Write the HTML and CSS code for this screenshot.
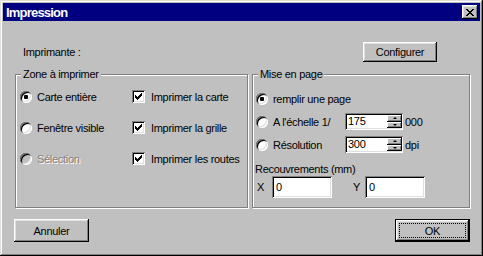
FILE: index.html
```html
<!DOCTYPE html>
<html lang="fr">
<head>
<meta charset="utf-8">
<title>Impression</title>
<link rel="stylesheet" href="styles.css">
</head>
<body>
<div class="window">
  <div class="titlebar">
    <span class="title">Impression</span>
    <button class="close" aria-label="Fermer">
      <svg width="8" height="7" viewBox="0 0 8 7" shape-rendering="crispEdges">
        <rect x="0" y="0" width="2" height="1"/><rect x="6" y="0" width="2" height="1"/>
        <rect x="1" y="1" width="2" height="1"/><rect x="5" y="1" width="2" height="1"/>
        <rect x="2" y="2" width="4" height="1"/>
        <rect x="3" y="3" width="2" height="1"/>
        <rect x="2" y="4" width="4" height="1"/>
        <rect x="1" y="5" width="2" height="1"/><rect x="5" y="5" width="2" height="1"/>
        <rect x="0" y="6" width="2" height="1"/><rect x="6" y="6" width="2" height="1"/>
      </svg>
    </button>
  </div>
  <div class="content">
    <div class="header">
      <span class="printer-label">Imprimante :</span>
      <button class="btn btn-config">Configurer</button>
    </div>
    <div class="groups">
      <div class="group group-zone">
        <div class="group-label">Zone à imprimer</div>
        <div class="zone-grid">
          <div class="opt"><span class="radio checked"></span><span>Carte entière</span></div>
          <div class="opt opt-check"><span class="check"><svg width="7" height="7" viewBox="0 0 7 7" shape-rendering="crispEdges"><rect x="0" y="2" width="1" height="3"/><rect x="1" y="3" width="1" height="3"/><rect x="2" y="4" width="1" height="3"/><rect x="3" y="3" width="1" height="3"/><rect x="4" y="2" width="1" height="3"/><rect x="5" y="1" width="1" height="3"/><rect x="6" y="0" width="1" height="3"/></svg></span><span>Imprimer la carte</span></div>
          <div class="opt"><span class="radio"></span><span>Fenêtre visible</span></div>
          <div class="opt opt-check"><span class="check"><svg width="7" height="7" viewBox="0 0 7 7" shape-rendering="crispEdges"><rect x="0" y="2" width="1" height="3"/><rect x="1" y="3" width="1" height="3"/><rect x="2" y="4" width="1" height="3"/><rect x="3" y="3" width="1" height="3"/><rect x="4" y="2" width="1" height="3"/><rect x="5" y="1" width="1" height="3"/><rect x="6" y="0" width="1" height="3"/></svg></span><span>Imprimer la grille</span></div>
          <div class="opt disabled"><span class="radio"></span><span>Sélection</span></div>
          <div class="opt opt-check"><span class="check"><svg width="7" height="7" viewBox="0 0 7 7" shape-rendering="crispEdges"><rect x="0" y="2" width="1" height="3"/><rect x="1" y="3" width="1" height="3"/><rect x="2" y="4" width="1" height="3"/><rect x="3" y="3" width="1" height="3"/><rect x="4" y="2" width="1" height="3"/><rect x="5" y="1" width="1" height="3"/><rect x="6" y="0" width="1" height="3"/></svg></span><span>Imprimer les routes</span></div>
        </div>
      </div>
      <div class="group group-page">
        <div class="group-label">Mise en page</div>
        <div class="page-grid">
          <div class="opt span-all"><span class="radio checked"></span><span>remplir une page</span></div>
          <div class="opt"><span class="radio"></span><span>A l'échelle 1/</span></div>
          <div class="spin"><span class="spin-value">175</span><span class="spin-buttons"><span class="spin-btn"><span class="tri-up"></span></span><span class="spin-btn"><span class="tri-down"></span></span></span></div>
          <span class="suffix">000</span>
          <div class="opt"><span class="radio"></span><span>Résolution</span></div>
          <div class="spin"><span class="spin-value">300</span><span class="spin-buttons"><span class="spin-btn"><span class="tri-up"></span></span><span class="spin-btn"><span class="tri-down"></span></span></span></div>
          <span class="suffix">dpi</span>
        </div>
        <div class="overlap-label">Recouvrements (mm)</div>
        <div class="overlap-row">
          <span class="axis">X</span>
          <span class="field">0</span>
          <span class="axis axis-y">Y</span>
          <span class="field">0</span>
        </div>
      </div>
    </div>
    <div class="footer">
      <button class="btn btn-foot">Annuler</button>
      <button class="btn btn-foot btn-default"><span class="focus">OK</span></button>
    </div>
  </div>
</div>
</body>
</html>
```

FILE: styles.css
```css
* {
  box-sizing: border-box;
}

body {
  margin: 0;
  background: #c0c0c0;
  color: #000;
  font-family: "Liberation Sans", Arial, sans-serif;
  font-size: 11px;
  letter-spacing: -0.3px;
}

.window {
  width: 483px;
  height: 256px;
  padding: 3px;
  background: #c0c0c0;
  box-shadow: inset -1px -1px #000, inset 1px 1px #dfdfdf, inset -2px -2px #808080, inset 2px 2px #fff;
}

.titlebar {
  height: 18px;
  background: #000080;
  display: flex;
  align-items: center;
  justify-content: space-between;
  padding: 0 2px 0 3px;
}

.title {
  color: #fff;
  font-weight: bold;
  font-size: 13px;
  letter-spacing: -0.8px;
}

.close {
  width: 16px;
  height: 14px;
  padding: 1px 0 0 0;
  border: 0;
  background: #c0c0c0;
  box-shadow: inset -1px -1px #000, inset 1px 1px #fff, inset -2px -2px #808080, inset 2px 2px #dfdfdf;
  display: flex;
  align-items: center;
  justify-content: center;
}

.close svg {
  display: block;
  fill: #000;
}

.content {
  padding: 0 10px 0 11px;
}

.header {
  display: flex;
  align-items: center;
  height: 20px;
  margin-top: 21px;
}

.printer-label {
  margin-left: 9px;
}

.btn {
  font: inherit;
  letter-spacing: inherit;
  color: #000;
  background: #c0c0c0;
  border: 0;
  padding: 0;
  box-shadow: inset -1px -1px #000, inset 1px 1px #fff, inset -2px -2px #808080, inset 2px 2px #dfdfdf;
}

.btn-config {
  margin-left: auto;
  margin-right: 33px;
  width: 74px;
  height: 20px;
}

.groups {
  display: flex;
  gap: 4px;
  padding-left: 1px;
  margin-top: 12px;
  height: 134px;
}

.group {
  border: 1px solid #808080;
  box-shadow: inset 1px 1px #fff, 1px 1px #fff;
}

.group-zone {
  width: 233px;
}

.group-page {
  width: 218px;
}

.group-label {
  width: max-content;
  margin: -7px 0 0 5px;
  padding: 0 2px;
  line-height: 13px;
  background: #c0c0c0;
}

.zone-grid {
  display: grid;
  grid-template-columns: 112px auto;
  grid-auto-rows: 31px;
  align-items: center;
  padding-left: 4px;
}

.opt {
  display: flex;
  align-items: center;
  gap: 5px;
  white-space: nowrap;
}

.opt-check {
  gap: 6px;
}

.opt.disabled {
  color: #808080;
  text-shadow: 1px 1px #fff;
}

.radio {
  flex: none;
  width: 12px;
  height: 12px;
  border-radius: 50%;
  background: #fff;
  box-shadow: inset 1px 1px #808080, inset -1px -1px #fff, inset 2px 2px #000, inset -2px -2px #dfdfdf;
  display: flex;
  align-items: center;
  justify-content: center;
}

.radio.checked::after {
  content: "";
  width: 4px;
  height: 4px;
  border-radius: 1px;
  background: #000;
}

.disabled .radio {
  background: #c0c0c0;
}

.check {
  flex: none;
  width: 13px;
  height: 13px;
  background: #fff;
  box-shadow: inset 1px 1px #808080, inset -1px -1px #fff, inset 2px 2px #000, inset -2px -2px #dfdfdf;
  display: flex;
  align-items: center;
  justify-content: center;
}

.check svg {
  display: block;
  fill: #000;
}

.page-grid {
  display: grid;
  grid-template-columns: 89px 58px auto;
  grid-auto-rows: 23px;
  align-items: center;
  padding-left: 3px;
  margin-top: 6px;
}

.span-all {
  grid-column: 1 / -1;
}

.spin {
  display: flex;
  height: 17px;
  padding: 2px 1px 2px 2px;
  background: #fff;
  box-shadow: inset 1px 1px #808080, inset -1px -1px #fff, inset 2px 2px #000, inset -2px -2px #dfdfdf;
}

.spin-value {
  flex: 1;
  padding-left: 1px;
  line-height: 13px;
}

.spin-buttons {
  width: 15px;
  display: flex;
  flex-direction: column;
}

.spin-btn {
  flex: 1;
  display: flex;
  align-items: center;
  justify-content: center;
  background: #c0c0c0;
  box-shadow: inset -1px -1px #000, inset 1px 1px #fff, inset -2px -2px #808080;
}

.tri-up {
  width: 0;
  height: 0;
  border-left: 2px solid transparent;
  border-right: 2px solid transparent;
  border-bottom: 2px solid #000;
}

.tri-down {
  width: 0;
  height: 0;
  border-left: 2px solid transparent;
  border-right: 2px solid transparent;
  border-top: 2px solid #000;
}

.suffix {
  margin-left: 2px;
}

.overlap-label {
  margin: 7px 0 0 2px;
  line-height: 13px;
}

.overlap-row {
  display: flex;
  align-items: center;
  padding-left: 4px;
}

.axis {
  width: 15px;
}

.axis-y {
  width: 12px;
  margin-left: 21px;
}

.field {
  width: 60px;
  height: 22px;
  display: flex;
  align-items: center;
  padding: 0 0 1px 4px;
  background: #fff;
  box-shadow: inset 1px 1px #808080, inset -1px -1px #fff, inset 2px 2px #000, inset -2px -2px #dfdfdf;
}

.footer {
  display: flex;
  justify-content: space-between;
  margin-top: 11px;
}

.btn-foot {
  width: 75px;
  height: 23px;
}

.btn-default {
  border: 1px solid #000;
  padding: 3px;
}

.focus {
  display: flex;
  height: 100%;
  align-items: center;
  justify-content: center;
  border: 1px dotted #000;
}
```
